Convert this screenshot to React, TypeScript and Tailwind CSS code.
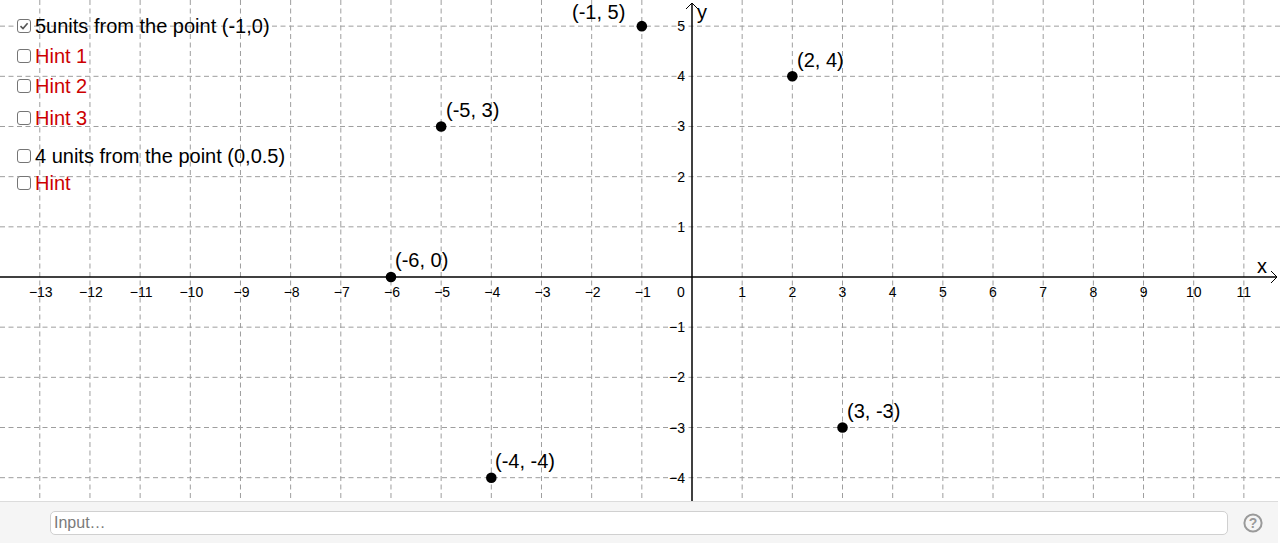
import React from "react";

const U = 50.17;
const OX = 692;
const OY = 277;
const W = 1280;
const H = 501;

const px = (x: number) => OX + x * U;
const py = (y: number) => OY - y * U;

const points: { x: number; y: number; label: string; lx: number; ly: number }[] = [
  { x: -1, y: 5, label: "(-1, 5)", lx: 572, ly: 19 },
  { x: 2, y: 4, label: "(2, 4)", lx: 797, ly: 67 },
  { x: -5, y: 3, label: "(-5, 3)", lx: 446, ly: 117 },
  { x: -6, y: 0, label: "(-6, 0)", lx: 395, ly: 267 },
  { x: 3, y: -3, label: "(3, -3)", lx: 847, ly: 418 },
  { x: -4, y: -4, label: "(-4, -4)", lx: 495, ly: 468 },
];

const checks: { top: number; text: string; red: boolean; checked: boolean }[] = [
  { top: 25.5, text: "5units from the point (-1,0)", red: false, checked: true },
  { top: 56.3, text: "Hint 1", red: true, checked: false },
  { top: 86, text: "Hint 2", red: true, checked: false },
  { top: 118, text: "Hint 3", red: true, checked: false },
  { top: 156, text: "4 units from the point (0,0.5)", red: false, checked: false },
  { top: 182.5, text: "Hint", red: true, checked: false },
];

function minus(n: number) {
  return n < 0 ? "\u2212" + Math.abs(n) : String(n);
}

function Graph() {
  const xs: number[] = [];
  for (let k = -13; k <= 11; k++) if (k !== 0) xs.push(k);
  const ys: number[] = [];
  for (let k = -4; k <= 5; k++) if (k !== 0) ys.push(k);
  return (
    <svg width={W} height={H} viewBox={`0 0 ${W} ${H}`} className="block">
      <rect x={0} y={0} width={W} height={H} fill="#ffffff" />
      {xs.map((k) => (
        <line
          key={"gx" + k}
          x1={px(k)}
          x2={px(k)}
          y1={0}
          y2={H}
          stroke="#9e9e9e"
          strokeWidth={1}
          strokeDasharray="5 3.5"
        />
      ))}
      {ys.map((k) => (
        <line
          key={"gy" + k}
          x1={0}
          x2={W}
          y1={py(k)}
          y2={py(k)}
          stroke="#9e9e9e"
          strokeWidth={1}
          strokeDasharray="5 3.5"
        />
      ))}
      {/* axes */}
      <line x1={0} x2={1277} y1={OY} y2={OY} stroke="#000" strokeWidth={1.5} />
      <polyline points="1271,271 1277,277 1271,283" fill="none" stroke="#000" strokeWidth={1} />
      <line x1={OX} x2={OX} y1={H} y2={3} stroke="#000" strokeWidth={1.5} />
      <polyline points="686,9 692,3 698,9" fill="none" stroke="#000" strokeWidth={1} />
      <g fontFamily="'Liberation Sans', Arial, sans-serif" fill="#000">
        <text x={1257} y={273} fontSize={20}>x</text>
        <text x={697} y={19} fontSize={20}>y</text>
        {xs.map((k) => (
          <text key={"lx" + k} x={px(k) + (k < 0 ? 1 : 0)} y={297} fontSize={14} textAnchor="middle">
            {minus(k)}
          </text>
        ))}
        <text x={681} y={297} fontSize={14} textAnchor="middle">0</text>
        {ys.map((k) => (
          <text key={"ly" + k} x={685} y={py(k) + 5} fontSize={14} textAnchor="end">
            {minus(k)}
          </text>
        ))}
        {points.map((p) => (
          <g key={p.label}>
            <circle cx={px(p.x)} cy={py(p.y)} r={5.3} fill="#000" />
            <text x={p.lx} y={p.ly} fontSize={20}>
              {p.label}
            </text>
          </g>
        ))}
      </g>
    </svg>
  );
}

function Box({ checked }: { checked: boolean }) {
  return (
    <div className="w-[14px] h-[14px] rounded-[3px] border-[1.5px] border-[#757575] bg-white flex items-center justify-center shrink-0">
      {checked && (
        <svg width="10" height="10" viewBox="0 0 10 10">
          <polyline points="1.5,5.2 4,7.6 8.6,2.2" fill="none" stroke="#555" strokeWidth="1.6" />
        </svg>
      )}
    </div>
  );
}

export default function App() {
  return (
    <div className="w-[1280px] h-[546px] bg-white overflow-hidden font-['Liberation_Sans',Arial,sans-serif]">
      <div className="relative w-[1280px] h-[501px]">
        <Graph />
        {checks.map((c) => (
          <div
            key={c.text}
            className="absolute left-[17px] h-[20px] flex items-center gap-[4px]"
            style={{ top: c.top - 10 }}
          >
            <Box checked={c.checked} />
            <span
              className={
                "text-[20px] leading-[20px] whitespace-nowrap " +
                (c.red ? "text-[#cc0000]" : "text-black")
              }
            >
              {c.text}
            </span>
          </div>
        ))}
      </div>
      <div className="w-[1278px] h-[42px] bg-[#f5f5f5] border-t border-[#dcdcdc] flex items-center">
        <div className="ml-[50px] w-[1178px] h-[24px] bg-white border border-[#d0d0d0] rounded-[5px] flex items-center px-[3px]">
          <span className="text-[16px] text-[#7a7a7a] leading-none">Input…</span>
        </div>
        <div className="ml-[15px] w-[20px] h-[20px] flex items-center justify-center">
          <svg width="20" height="20" viewBox="0 0 20 20">
            <circle cx="10" cy="10" r="8.6" fill="none" stroke="#9a9a9a" strokeWidth="2" />
            <text
              x="10"
              y="14.8"
              textAnchor="middle"
              fontSize="14"
              fontWeight="bold"
              fill="#9a9a9a"
              fontFamily="'Liberation Sans', Arial, sans-serif"
            >
              ?
            </text>
          </svg>
        </div>
      </div>
    </div>
  );
}
